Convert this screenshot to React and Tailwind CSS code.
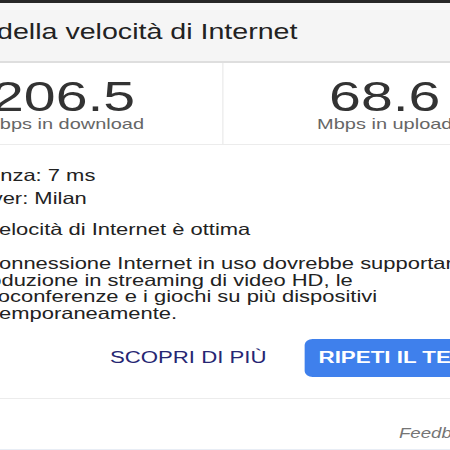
import React from 'react';

const SpeedTest = () => {
  return (
    <div className="w-[450px] h-[450px] overflow-hidden bg-white font-['Liberation_Sans',Arial,sans-serif] text-[#222]">
      {/* the screenshot is stretched sideways, so the card is too */}
      <div className="ml-[-101px] w-[487px] origin-top-left scale-x-[1.33]">
        <div className="h-[3px] bg-[#262626]"></div>

        {/* header */}
        <div className="h-[60px] bg-[#f5f5f5] border-b-2 border-[#dedede] pl-[28.3px] pt-[19px]">
          <h1 className="text-[21.5px] leading-[21px] whitespace-nowrap">Test della velocità di Internet</h1>
        </div>

        {/* results */}
        <div className="grid grid-cols-2 h-[82px] border-b border-[#ececec]">
          <div className="flex flex-col items-center pl-[5px] pt-[12.5px] border-r-[1.5px] border-[#ececec]">
            <div className="text-[43px] leading-[40px] text-[#333]">206.5</div>
            <div className="text-[15px] leading-[15px] text-[#666] whitespace-nowrap">Mbps in download</div>
          </div>
          <div className="flex flex-col items-center pt-[12.5px]">
            <div className="text-[43px] leading-[40px] text-[#333]">68.6</div>
            <div className="text-[15px] leading-[15px] text-[#666] whitespace-nowrap">Mbps in upload</div>
          </div>
        </div>

        {/* details */}
        <div className="pl-[44px] pt-[19px] text-[16.5px] whitespace-nowrap">
          <div className="leading-[23px]">Latenza: 7 ms</div>
          <div className="leading-[23px]">Server: Milan</div>
          <div className="mt-[8px] leading-[23px]">La velocità di Internet è ottima</div>
          <p className="mt-[14px] leading-[16.5px]">
            La connessione Internet in uso dovrebbe supportare la
            <br />
            riproduzione in streaming di video HD, le
            <br />
            videoconferenze e i giochi su più dispositivi
            <br />
            contemporaneamente.
          </p>
        </div>

        {/* actions */}
        <div className="flex items-center gap-[28.6px] pl-[158.6px] mt-[18px]">
          <button className="text-[16.7px] leading-[20px] text-[#262673] whitespace-nowrap">SCOPRI DI PIÙ</button>
          <button className="h-[38px] px-[10.5px] rounded-[6px] bg-[#3f80ec] text-white font-bold text-[16.8px] whitespace-nowrap">
            RIPETI IL TEST
          </button>
        </div>

        <div className="mt-[21px] h-px bg-[#ececec]"></div>

        <div className="h-[50px] pl-[375.9px] pt-[21.6px]">
          <span className="italic text-[14px] leading-[14px] text-[#757575]">Feedback</span>
        </div>
        <div className="h-[10px] bg-[#e8edf5]"></div>
      </div>
    </div>
  );
};

export default function App() {
  return <SpeedTest />;
}
